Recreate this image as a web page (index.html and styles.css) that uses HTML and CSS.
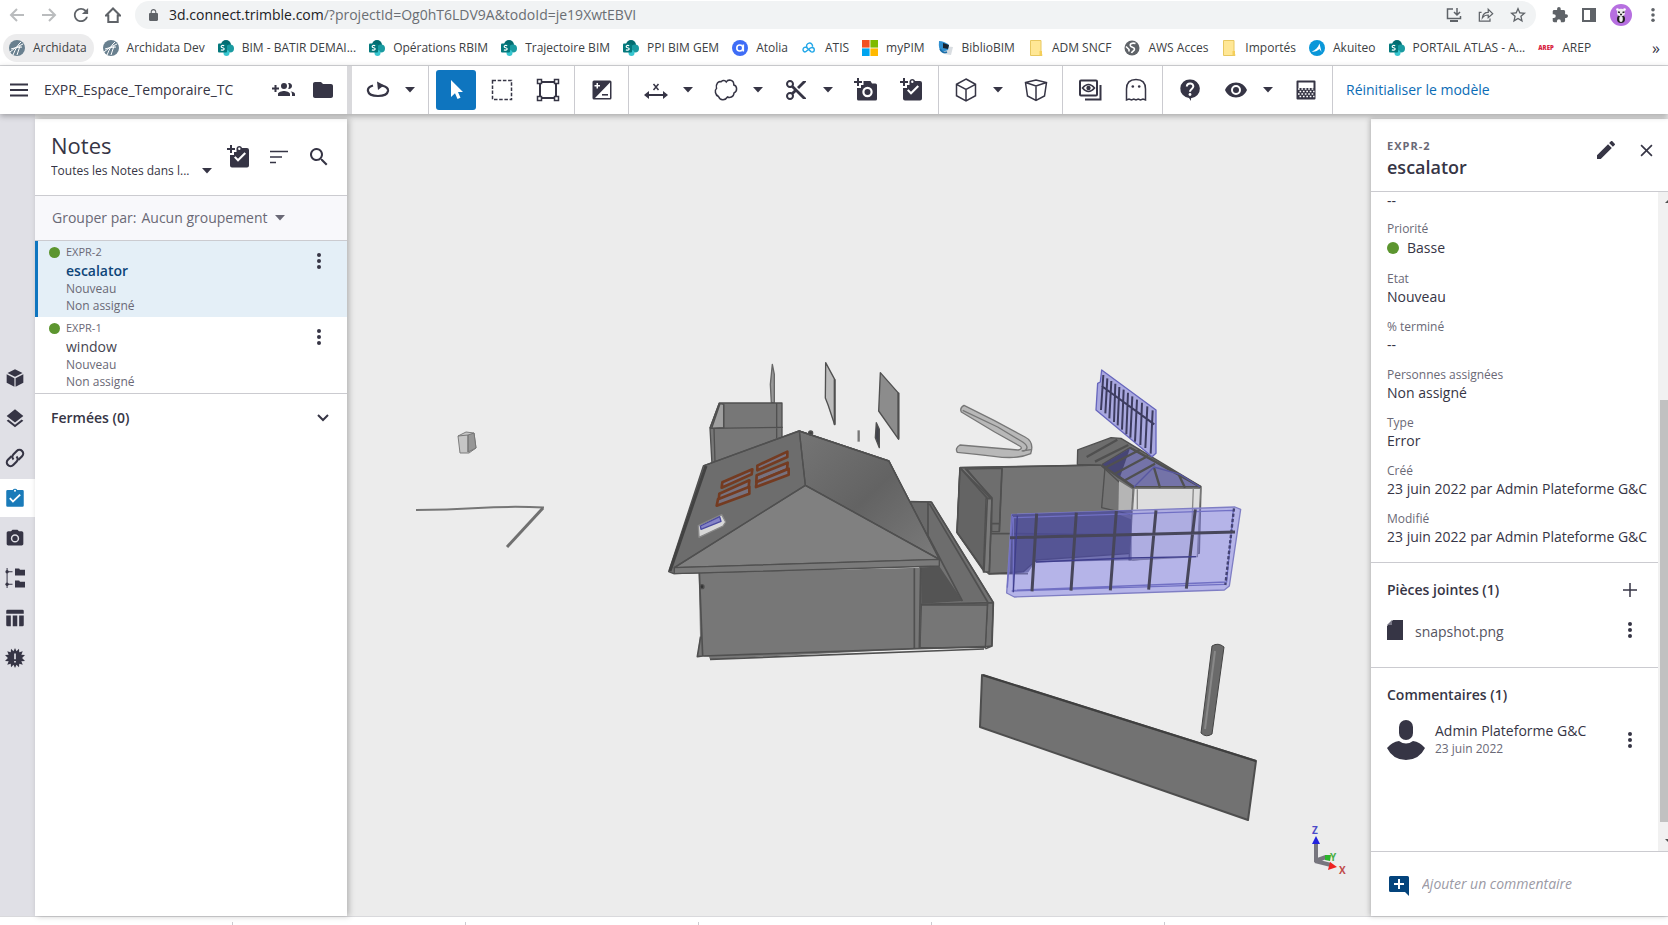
FILE: index.html
```html
<!DOCTYPE html>
<html lang="fr">
<head>
<meta charset="utf-8">
<title>Trimble Connect 3D</title>
<link rel="stylesheet" href="styles.css">
</head>
<body>
<svg class="sprite" aria-hidden="true">
  <symbol id="i-caret" viewBox="0 0 10 6"><path d="M0 0h10L5 5.500z"/></symbol>
  <symbol id="i-dots" viewBox="0 0 4 18"><circle cx="2" cy="3" r="2"/><circle cx="2" cy="9" r="2"/><circle cx="2" cy="15" r="2"/></symbol>
  <symbol id="i-clip-add" viewBox="0 0 24 24"><path d="M3 0h2v3h3v2H5v3H3V5H0V3h3z"/><path fill-rule="evenodd" d="M9.500 3a3 3 0 0 1 5.600 0H20a2 2 0 0 1 2 2v15.500a2 2 0 0 1-2 2H5a2 2 0 0 1-2-2V10h4V7h2.500zM12.300 2.500a1.200 1.200 0 1 0 0 2.400 1.200 1.200 0 0 0 0-2.400zM7 12.600l4 4.200 8-8-1.500-1.500-6.500 6.500-2.500-2.600z"/></symbol>
  <symbol id="i-camera" viewBox="0 0 24 24"><path fill-rule="evenodd" d="M9 2L7.170 4H4c-1.100 0-2 .9-2 2v13c0 1.100.9 2 2 2h16c1.100 0 2-.9 2-2V6c0-1.100-.9-2-2-2h-3.170L15 2H9zm3 15.500a5 5 0 1 1 0-10 5 5 0 0 1 0 10z"/><circle cx="12" cy="12.500" r="3.200"/></symbol>
  <symbol id="i-share" viewBox="0 0 18 18"><g fill="none" stroke="currentColor" stroke-width="1.400"><path d="M4 6H1.500v10h12v-3"/><path d="M5 12c.5-4 3-6 6.500-6V2.500L16.500 7.500l-5 4.500V9C9 9 6.500 10 5 12z"/></g></symbol>
  <symbol id="i-sp" viewBox="0 0 16 16"><circle cx="8" cy="5" r="5" fill="#036c70"/><circle cx="12" cy="8.500" r="4" fill="#1a9ba1"/><circle cx="8.500" cy="13" r="3" fill="#37c6d0"/><rect y="3.500" width="9" height="9" rx="1" fill="#03787c"/><path d="M6.200 5.800C4.800 5 3 5.500 3.200 6.800s3.100.7 3 2.200c-.1 1.200-2 1.500-3.300.7" fill="none" stroke="#fff" stroke-width="1.200"/></symbol>
  <symbol id="i-arch" viewBox="0 0 16 16"><circle cx="8" cy="8" r="8" fill="#69808f"/><path d="M1 12Q6 7 14 4M4 15Q8 5 12 2M8 15l3-9M2 9q5-2 11-2" stroke="#fff" stroke-width="1" fill="none"/></symbol>
  <symbol id="i-fold" viewBox="0 0 16 16"><path d="M2.500.500h10.500v11.500l1 3.500h-11.500z" fill="#ffe795" stroke="#e8c860"/><path d="M11.500 11h2.500v4.500h-2.500z" fill="#f5cf5a"/></symbol>
</svg>

<header class="browser">
  <div class="nav-row">
    <div class="nav-buttons">
      <button class="nav-btn off" aria-label="Précédent"><svg viewBox="0 0 16 16"><path d="M15 8H2M8 2L2 8l6 6" class="ln"/></svg></button>
      <button class="nav-btn off" aria-label="Suivant"><svg viewBox="0 0 16 16"><path d="M1 8h13M8 2l6 6-6 6" class="ln"/></svg></button>
      <button class="nav-btn" aria-label="Actualiser"><svg viewBox="3 3 18 18"><path d="M17.650 6.350C16.200 4.900 14.210 4 12 4c-4.420 0-7.990 3.580-7.990 8s3.570 8 7.990 8c3.730 0 6.840-2.550 7.730-6h-2.080c-.82 2.330-3.040 4-5.650 4-3.310 0-6-2.690-6-6s2.690-6 6-6c1.660 0 3.140.69 4.220 1.780L13 11h7V4z"/></svg></button>
      <button class="nav-btn" aria-label="Accueil"><svg viewBox="0 0 16 16"><path d="M1 8.500L8 1.500l7 7H12.700V15H3.300V8.500z" class="ln"/></svg></button>
    </div>
    <div class="url">
      <svg class="lock" viewBox="4 1 16 21"><path d="M18 8h-1V6c0-2.760-2.240-5-5-5S7 3.240 7 6v2H6c-1.100 0-2 .9-2 2v10c0 1.100.9 2 2 2h12c1.100 0 2-.9 2-2V10c0-1.100-.9-2-2-2zm-2.900 0H8.900V6c0-1.710 1.390-3.100 3.100-3.100s3.100 1.390 3.100 3.100v2z"/></svg>
      <span class="url-text"><b>3d.connect.trimble.com</b>/?projectId=Og0hT6LDV9A&amp;todoId=je19XwtEBVI</span>
      <button class="nav-btn" aria-label="Installer"><svg viewBox="0 0 16 16"><path d="M7 2H1.500v9.500h13V9M11 1v6.500M8 5l3 3 3-3" class="thin"/><path d="M4 13h8v2H4z"/></svg></button>
      <button class="nav-btn" aria-label="Partager"><svg><use href="#i-share"/></svg></button>
      <button class="nav-btn" aria-label="Favori"><svg viewBox="2 2 20 20"><path d="M22 9.240l-7.190-.62L12 2 9.190 8.630 2 9.240l5.460 4.730L5.820 21 12 17.270 18.180 21l-1.630-7.030L22 9.240zM12 15.400l-3.760 2.270 1-4.280-3.320-2.880 4.380-.38L12 6.100l1.710 4.040 4.380.38-3.320 2.880 1 4.280L12 15.400z"/></svg></button>
    </div>
    <div class="nav-end">
      <button class="nav-btn" aria-label="Extensions"><svg viewBox="1 1 22 22"><path d="M20.500 11H19V7c0-1.100-.9-2-2-2h-4V3.500a2.500 2.500 0 0 0-5 0V5H4c-1.100 0-2 .9-2 2v3.800h1.500a2.700 2.700 0 0 1 0 5.400H2V20c0 1.100.9 2 2 2h3.800v-1.500a2.700 2.700 0 0 1 5.400 0V22H17c1.100 0 2-.9 2-2v-4h1.500a2.500 2.500 0 0 0 0-5z"/></svg></button>
      <button class="nav-btn" aria-label="Panneau latéral"><svg viewBox="0 0 16 16"><path fill-rule="evenodd" d="M1 1h14v14H1zM3 3v10h6V3z"/></svg></button>
      <button class="nav-btn profile" aria-label="Profil"><svg viewBox="0 0 22 22"><circle cx="11" cy="11" r="11" fill="#b66fe0"/><ellipse cx="11" cy="15" rx="4" ry="4" fill="#222"/><ellipse cx="11" cy="15" rx="1.800" ry="3" fill="#eee"/><circle cx="7.500" cy="5.500" r="1.300" fill="#fff"/><circle cx="14.500" cy="5.500" r="1.300" fill="#fff"/><ellipse cx="11" cy="8.500" rx="4" ry="3.800" fill="#eee"/><path d="M8 8l2 .5M12.500 8.500l2-.5M10 10.500h2" stroke="#222" stroke-width="1.300"/></svg></button>
      <button class="nav-btn" aria-label="Menu"><svg><use href="#i-dots"/></svg></button>
    </div>
  </div>
  <nav class="bookmarks" aria-label="Favoris">
    <a href="#" class="current"><svg><use href="#i-arch"/></svg>Archidata</a>
    <a href="#"><svg><use href="#i-arch"/></svg>Archidata Dev</a>
    <a href="#"><svg><use href="#i-sp"/></svg>BIM - BATIR DEMAI...</a>
    <a href="#"><svg><use href="#i-sp"/></svg>Opérations RBIM</a>
    <a href="#"><svg><use href="#i-sp"/></svg>Trajectoire BIM</a>
    <a href="#"><svg><use href="#i-sp"/></svg>PPI BIM GEM</a>
    <a href="#"><svg viewBox="0 0 16 16"><circle cx="8" cy="8" r="8" fill="#3f6df6"/><circle cx="7.800" cy="8" r="3" fill="none" stroke="#fff" stroke-width="1.600"/><path d="M11.300 4.500v7" stroke="#fff" stroke-width="1.600"/></svg>Atolia</a>
    <a href="#"><svg viewBox="0 0 16 16"><path d="M10 11.500L5.500 7.500A2.400 2.400 0 1 0 4 12c2 0 4-4.500 7-4.500a2.300 2.300 0 0 1 0 4.600c-2 0-3.500-3-5-4.500a3 3 0 1 1 5.500-1" fill="none" stroke="#22a7e8" stroke-width="1.400"/></svg>ATIS</a>
    <a href="#"><svg viewBox="0 0 16 16"><path d="M0 0h7.600v7.600H0z" fill="#f25022"/><path d="M8.400 0H16v7.600H8.400z" fill="#7fba00"/><path d="M0 8.400h7.600V16H0z" fill="#00a4ef"/><path d="M8.400 8.400H16V16H8.400z" fill="#ffb900"/></svg>myPIM</a>
    <a href="#"><svg viewBox="0 0 16 16"><path d="M6 6l9 1-2 8-7-1z" fill="#d9dde1"/><path d="M1 1q5 0 10 4l-1 5-6 2q-4-2-3-11z" fill="#2f8fd0"/><path d="M5 3l6 2-1 4-5-1z" fill="#182430"/><path d="M2 9q3 5 7 3" stroke="#1d6fa8" fill="none" stroke-width="1.500"/></svg>BiblioBIM</a>
    <a href="#"><svg><use href="#i-fold"/></svg>ADM SNCF</a>
    <a href="#"><svg viewBox="0 0 16 16"><circle cx="8" cy="8" r="7.500" fill="#5f6368"/><path d="M11.500 3.500c-3-1-6 0-5 2.500.7 1.500 4 1 4 3 0 2-2 2-3 4M2 6.500l3 3v2" fill="none" stroke="#fff" stroke-width="1.600"/></svg>AWS Acces</a>
    <a href="#"><svg><use href="#i-fold"/></svg>Importés</a>
    <a href="#"><svg viewBox="0 0 16 16"><circle cx="8" cy="8" r="8" fill="#0a97d9"/><path d="M2.500 11.500C6 10.500 9 8 10.500 3.500l2 8.500-2-3C8.500 11 5.500 12 2.500 11.500z" fill="#fff"/></svg>Akuiteo</a>
    <a href="#"><svg><use href="#i-sp"/></svg>PORTAIL ATLAS - A...</a>
    <a href="#"><span class="arep">AREP</span>AREP</a>
    <button class="more" aria-label="Autres favoris">»</button>
  </nav>
</header>

<div class="topbar">
  <div class="project">
    <button class="icon-btn menu" aria-label="Menu"><svg viewBox="0 0 18 14"><path d="M0 1.500h18M0 7h18M0 12.500h18" class="ln"/></svg></button>
    <span class="project-name">EXPR_Espace_Temporaire_TC</span>
    <button class="icon-btn" aria-label="Inviter"><svg class="s24" viewBox="0 0 24 24"><path d="M8 9.500H5.500V7h-2v2.500H1v2h2.500V14h2v-2.500H8zM18 11c1.660 0 3-1.340 3-3s-1.340-3-3-3c-.32 0-.63.050-.91.140.57.81.9 1.790.9 2.860s-.34 2.040-.9 2.860c.28.090.59.140.91.140zm-5 0a3 3 0 1 0 0-6 3 3 0 0 0 0 6zm6.620 2.160c.83.73 1.380 1.660 1.380 2.840v2h3v-2c0-1.540-2.370-2.490-4.380-2.840zM13 13c-2 0-6 1-6 3v2h12v-2c0-2-4-3-6-3z"/></svg></button>
    <button class="icon-btn" aria-label="Dossier"><svg class="s24" viewBox="0 0 24 24"><path d="M10 4H4c-1.100 0-2 .9-2 2v12c0 1.100.9 2 2 2h16c1.100 0 2-.9 2-2V8c0-1.100-.9-2-2-2h-8z"/></svg></button>
  </div>
  <div class="tools">
    <div class="group">
      <div class="pair"><button class="tool" aria-label="Orbite"><svg viewBox="0 0 24 24"><path d="M7 7.500C3.500 8.500 1.500 10.500 2 13c.5 3 4.500 5 10 5s9.500-2 10-5c.3-2.500-2-4.500-6-5.300" fill="none" stroke="currentColor" stroke-width="2.200"/><path d="M11 3.500l7 3.700-6 4.800z"/></svg></button><button class="drop" aria-label="Options d'orbite"><svg><use href="#i-caret"/></svg></button></div>
    </div>
    <div class="group">
      <button class="tool active" aria-label="Sélection"><svg viewBox="0 0 24 24"><path d="M7 2v17l4-3.700L13.500 21l3-1.300L14 14h5z"/></svg></button>
      <button class="tool" aria-label="Rectangle"><svg viewBox="0 0 24 24"><path d="M2.500 2.500h19v19h-19z" fill="none" stroke="currentColor" stroke-width="1.500" stroke-dasharray="3.500 1.700"/></svg></button>
      <button class="tool" aria-label="Zone"><svg viewBox="0 0 24 24"><path d="M4 4h16v16H4z" class="ln"/><g fill="#fff" stroke="currentColor" stroke-width="1.500"><path d="M1.500 1.500h4v4h-4zM18.500 1.500h4v4h-4zM1.500 18.500h4v4h-4zM18.500 18.500h4v4h-4z"/></g></svg></button>
    </div>
    <div class="group">
      <button class="tool" aria-label="Contraste"><svg viewBox="0 0 24 24"><path fill-rule="evenodd" d="M4 2.500h16a1.500 1.500 0 0 1 1.500 1.500v16a1.500 1.500 0 0 1-1.500 1.500H4A1.500 1.500 0 0 1 2.500 20V4A1.500 1.500 0 0 1 4 2.500zM20 4.500L5 20h15zM6.500 5v2h-2v1.500h2v2H8v-2h2V7H8V5z"/><path d="M12 16h6v1.600h-6z"/></svg></button>
    </div>
    <div class="group">
      <div class="pair"><button class="tool" aria-label="Mesure"><svg viewBox="0 0 24 24"><path d="M0 17l5-4v3h14v-3l5 4-5 4v-3H5v3z"/><path d="M9.500 6l5 6M14.500 6l-5 6" stroke="currentColor" stroke-width="1.500"/></svg></button><button class="drop" aria-label="Options de mesure"><svg><use href="#i-caret"/></svg></button></div>
      <div class="pair"><button class="tool" aria-label="Annotation"><svg viewBox="0 0 24 24"><path d="M12.300 4C14 1 20 1.500 19.800 7c3.700 1 3.700 6.500.2 8-.3 4.500-4.500 5-6.500 4-2.500 4-7.500 3.500-9-.5C1 17 .5 12 2.500 10.500 1.500 5.500 4.500 3 7 3.800c2-1.800 4-1.500 5.300.2z" class="thin"/></svg></button><button class="drop" aria-label="Options d'annotation"><svg><use href="#i-caret"/></svg></button></div>
      <div class="pair"><button class="tool" aria-label="Coupe"><svg viewBox="0 0 24 24"><path d="M9.640 7.640c.23-.5.36-1.050.36-1.640 0-2.210-1.790-4-4-4S2 3.790 2 6s1.790 4 4 4c.59 0 1.140-.13 1.640-.36L10 12l-2.360 2.360C7.140 14.130 6.590 14 6 14c-2.210 0-4 1.790-4 4s1.790 4 4 4 4-1.790 4-4c0-.59-.13-1.140-.36-1.640L12 14l7 7h3v-1zM6 8a2 2 0 1 1 0-4 2 2 0 0 1 0 4zm0 12a2 2 0 1 1 0-4 2 2 0 0 1 0 4zM19 3l-6 6 2 2 7-7V3z"/></svg></button><button class="drop" aria-label="Options de coupe"><svg><use href="#i-caret"/></svg></button></div>
      <button class="tool" aria-label="Ajouter une vue"><svg viewBox="0 0 24 24"><path d="M3 0h2v3h3v2H5v3H3V5H0V3h3z"/><path fill-rule="evenodd" d="M9.500 3h7l1.500 2.500h3.500A1.500 1.500 0 0 1 23 7v14a1.500 1.500 0 0 1-1.500 1.500h-17A1.500 1.500 0 0 1 3 21V10h4V7h2.500zM13.500 8.800a5.200 5.200 0 1 0 0 10.400 5.200 5.200 0 0 0 0-10.400z"/><circle cx="13.500" cy="14" r="3"/></svg></button>
      <button class="tool" aria-label="Ajouter une note"><svg><use href="#i-clip-add"/></svg></button>
    </div>
    <div class="group">
      <div class="pair"><button class="tool" aria-label="Vue 3D"><svg viewBox="0 0 24 24"><path d="M12 1l9.500 5.300v11.400L12 23l-9.500-5.300V6.300zM2.500 6.300L12 11.500l9.500-5.200M12 11.500V23" class="thin"/></svg></button><button class="drop" aria-label="Options de vue"><svg><use href="#i-caret"/></svg></button></div>
      <button class="tool" aria-label="Perspective"><svg viewBox="0 0 24 24"><path d="M1.500 4.500L12 2l10.500 2.500L20.500 18 12 22.500 3.500 18zM1.500 4.500L12 8l10.500-3.500M12 8v14.500" class="thin"/></svg></button>
    </div>
    <div class="group">
      <button class="tool" aria-label="Vues"><svg viewBox="0 0 24 24"><rect x="2" y="2.500" width="17" height="15" rx="1" class="ln"/><path d="M7 21.500h15.500V7" class="ln"/><path d="M4.500 10q6-7 12 0-6 7-12 0z" fill="none" stroke="currentColor" stroke-width="1.600"/><circle cx="10.500" cy="10" r="2.200"/></svg></button>
      <button class="tool" aria-label="Fantôme"><svg viewBox="0 0 24 24"><path d="M2.500 22V11C2.500 5 6 1.500 12 1.500S21.500 5 21.500 11v11l-2.500-1-2.500 1-2.300-1-2.200 1-2.200-1-2.300 1L5 21z" class="thin"/><circle cx="8.800" cy="8.500" r="1.300"/><circle cx="15.200" cy="8.500" r="1.300"/></svg></button>
    </div>
    <div class="group">
      <button class="tool" aria-label="Aide"><svg viewBox="0 0 24 24"><path d="M12 1.500a9 9 0 0 0-1 18.400l2 3.100v-2.800A9 9 0 0 0 12 1.500z"/><path d="M8.800 8.500c.2-4.300 6.800-4 6.500 0-.2 2.500-3.300 2.500-3.300 5.300" fill="none" stroke="#fff" stroke-width="2"/><circle cx="12" cy="16.500" r="1.400" fill="#fff"/></svg></button>
      <div class="pair"><button class="tool" aria-label="Visibilité"><svg viewBox="0 0 24 24"><path fill-rule="evenodd" d="M12 4.500C7 4.500 2.730 7.610 1 12c1.730 4.390 6 7.500 11 7.500s9.270-3.110 11-7.500c-1.730-4.390-6-7.500-11-7.500zM12 17a5 5 0 1 1 0-10 5 5 0 0 1 0 10z"/><circle cx="12" cy="12" r="3"/></svg></button><button class="drop" aria-label="Options de visibilité"><svg><use href="#i-caret"/></svg></button></div>
      <button class="tool" aria-label="Transparence"><svg viewBox="0 0 24 24"><path fill-rule="evenodd" d="M3.500 2.500h17a1 1 0 0 1 1 1v17a1 1 0 0 1-1 1h-17a1 1 0 0 1-1-1v-17a1 1 0 0 1 1-1zM4.500 4.500V10h15V4.500z"/><path d="M4 11h16M5.500 13.500h15M4 16h16M5.500 18.500h15" stroke="#fff" stroke-width="1.500" stroke-dasharray="1.700 1.700"/></svg></button>
    </div>
    <button class="reset">Réinitialiser le modèle</button>
  </div>
</div>

<main class="workspace">
  <nav class="rail" aria-label="Panneaux">
    <button aria-label="Modèles"><svg viewBox="0 0 24 24"><path d="M12 1.500L21 6l-9 4.500L3 6zM2 7.500l9.300 4.700V22.500L2 17.800zM22 7.500l-9.300 4.700V22.500L22 17.800z"/></svg></button>
    <button aria-label="Calques"><svg viewBox="0 0 24 24"><path d="M12 20l-8-6.200-2 1.600 10 7.600 10-7.600-2-1.600zM12 17.500l10-7.800L12 1.500 2 9.700z"/></svg></button>
    <button aria-label="Liens"><svg viewBox="0 0 24 24"><g transform="rotate(-45 12 12)" fill="none" stroke="currentColor" stroke-width="2.600"><path d="M11 7.500H4.500a4.500 4.500 0 0 0 0 9H10a4.500 4.500 0 0 0 4.500-4.500"/><path d="M13 16.500h6.500a4.500 4.500 0 0 0 0-9H14A4.500 4.500 0 0 0 9.500 12"/></g></svg></button>
    <button class="active" aria-label="Notes"><svg viewBox="0 0 24 24"><path fill-rule="evenodd" d="M9.300 2.500a3 3 0 0 1 5.400 0H21a1.500 1.500 0 0 1 1.500 1.500v17a1.500 1.500 0 0 1-1.500 1.500H3A1.500 1.500 0 0 1 1.500 21V4A1.500 1.500 0 0 1 3 2.500zM12 2a1.200 1.200 0 1 0 0 2.400A1.200 1.200 0 0 0 12 2zM5 13l4.500 4.800 9.500-9-1.600-1.700-7.800 7.500-3-3.200z"/></svg></button>
    <button aria-label="Vues"><svg><use href="#i-camera"/></svg></button>
    <button aria-label="Arborescence"><svg viewBox="0 0 24 24"><path d="M2.500 0v24M2.500 4.500H9M2.500 19.500H9" stroke="currentColor" stroke-width="1.200"/><circle cx="2.500" cy="4.500" r="2"/><circle cx="2.500" cy="19.500" r="2"/><path d="M12 .5h5l1 1.500h6v7H12zM12 15h5l1 1.500h6V23.500H12z"/></svg></button>
    <button aria-label="Tableau"><svg viewBox="0 0 24 24"><path d="M3 2h18a1.500 1.500 0 0 1 1.500 1.500V7h-21V3.500A1.500 1.500 0 0 1 3 2zM1.500 9H7v13H3a1.500 1.500 0 0 1-1.500-1.500zM9.300 9h5.400v13H9.300zM17 9h5.500v11.500A1.500 1.500 0 0 1 21 22h-4z"/></svg></button>
    <button aria-label="Conflits"><svg viewBox="0 0 24 24"><path d="M12 0l1.800 4 3-3 .3 4.200 4.200-1.200-1.700 4L24 8.500 20.500 12l3.500 3.500-4.400.5 1.700 4-4.200-1.200-.3 4.200-3-3L12 24l-1.800-4-3 3-.3-4.200-4.200 1.200 1.700-4L0 15.500 3.500 12 0 8.500 4.400 8 2.700 4l4.200 1.200L7.200 1l3 3z"/><path d="M11 6.500h2v7h-2zM11 15.500h2v2h-2z" fill="#e0e0e6"/></svg></button>
  </nav>

  <section class="notes">
    <header class="notes-head">
      <div class="notes-title">
        <h1>Notes</h1>
        <div class="select-line small"><select aria-label="Filtre des notes"><option>Toutes les Notes dans l...</option></select><svg class="caret"><use href="#i-caret"/></svg></div>
      </div>
      <button class="icon-btn" aria-label="Ajouter une note"><svg class="s24"><use href="#i-clip-add"/></svg></button>
      <button class="icon-btn" aria-label="Trier"><svg viewBox="0 0 18 14"><path d="M0 1.500h18M0 7h12M0 12.500h6" stroke="currentColor" stroke-width="1.500"/></svg></button>
      <button class="icon-btn" aria-label="Rechercher"><svg viewBox="3 3 18 18"><path d="M15.500 14h-.79l-.28-.27A6.500 6.500 0 1 0 13.730 14.430l.27.28v.79l5 4.990L20.490 19zm-6 0a4.500 4.500 0 1 1 0-9 4.500 4.500 0 0 1 0 9z"/></svg></button>
    </header>
    <div class="select-line grouping"><label for="grp">Grouper par:</label><select id="grp"><option>Aucun groupement</option></select><svg class="caret"><use href="#i-caret"/></svg></div>
    <ul class="note-list">
      <li class="note selected">
        <i class="dot"></i>
        <div class="note-body"><span>EXPR-2</span><strong>escalator</strong><span>Nouveau</span><span>Non assigné</span></div>
        <button class="kebab" aria-label="Options EXPR-2"><svg><use href="#i-dots"/></svg></button>
      </li>
      <li class="note">
        <i class="dot"></i>
        <div class="note-body"><span>EXPR-1</span><strong>window</strong><span>Nouveau</span><span>Non assigné</span></div>
        <button class="kebab" aria-label="Options EXPR-1"><svg><use href="#i-dots"/></svg></button>
      </li>
    </ul>
    <button class="closed">Fermées (0)<svg viewBox="0 0 12 8"><path d="M1 1l5 5 5-5" class="ln"/></svg></button>
  </section>

  <section class="viewport" aria-label="Modèle 3D">
    <svg viewBox="347 113 1024 802" preserveAspectRatio="xMidYMid slice" role="img" aria-label="Modèle">
      <defs><linearGradient id="roof" x1="0" y1="0" x2="1" y2="1"><stop offset="0" stop-color="#757575"/><stop offset=".5" stop-color="#636363"/><stop offset="1" stop-color="#7b7b7b"/></linearGradient></defs>
      <g class="edge">
        <path d="M458 435l8-4 8 1 2 15-7 5h-9z" fill="#c6c6c6" stroke="#7d7d7d"/><path d="M468 434l6-2 2 15-8 4z" fill="#979797" stroke="#777"/><path d="M458 435l10-1v17" fill="none" stroke="#777"/>
        <path d="M416 509q30 0 62-2t66-.5" fill="none" stroke="#767676" stroke-width="2"/><path d="M543 507l-36 39" stroke="#707070" stroke-width="3"/>
      </g>
      <g transform="translate(640 350) scale(.33333)" class="big">
        <path d="M397 40l-6 60 3 55h9V70z" fill="#999" stroke="#666"/>
        <path d="M557 35l27 50v136l-20-60-8-20z" fill="#bcbcbc"/><path d="M584 85v136" stroke-width="6"/>
        <path d="M721 65l55 62v138l-60-85z" fill="#8c8c8c"/><path d="M775 125v138" stroke-width="6"/>
        <path d="M656 238v34" stroke="#777" stroke-width="7"/><path d="M709 215l9 20v55l-12-30z" fill="#41434b"/>
        <path d="M238 156h188v105l-210 80-6-110z" fill="#777"/><path d="M251 160v70l-36 2 25-74z" fill="#a0a0a0"/><path d="M210 232l218-3M251 160v70M410 156v105M222 234l3 100M238 156l-28 76"/>
        <path d="M806 452l68 1 186 302-5 130-20 2-195 5V650z" fill="#737373"/><path d="M864 454l-58-2 37 198 55-4-34-92z" fill="#6a6a6a" stroke="none"/><path d="M843 650l55-4 70 104-124 8z" fill="#545454" stroke="none"/><path d="M864 454l11 0 170 296-79 2-102-198z" fill="#6d6d6d" stroke="none"/>
        <path d="M806 452l68 1M864 454v100l103 196M874 453l186 302-4 130-20 8M868 458l175 295-8 138M843 760l217-5" stroke-width="5"/><path d="M844 762h198l-6 128H840z" fill="#767676"/>
        <path d="M176 665l667-15-3 243-630 32-3-8-35-2 8-60z" fill="#777" stroke="none"/><path d="M190 915l640-22 206-6M210 925l822-31M823 652v240M842 650l-4 242M178 665l10 250-16 2 10-60" stroke-width="5"/>
        <path d="M190 345l287-105 270 90 62 122 90 172-3 20-795 24-15-6z" fill="#6d6d6d"/><path d="M478 240l268 90 64 123 88 172-402-222z" fill="url(#roof)"/><path d="M496 403L103 650l795-25z" fill="#808080"/>
        <path d="M103 650l795-25v20L103 668z" fill="#7a7a7a"/><path d="M478 240l18 163L103 650M496 403l402 222M190 345l287-105 270 90 62 122 90 172"/><path d="M198 345L90 660" stroke-width="9" stroke="#424242"/>
        <circle cx="512" cy="246" r="6" fill="#444"/><circle cx="186" cy="707" r="6" fill="#333"/>
        <g fill="#77727f" stroke="#743b21" stroke-width="8"><path d="M247 394l90-39-2 15-90 40z"/><path d="M352 344l90-42v16l-90 40z"/><path d="M238 428l90-40-2 22-90 38z"/><path d="M350 373l93-38-2 20-92 38z"/><path d="M234 445l94-38v21l-98 36z"/><path d="M350 393l96-40v18l-98 37z"/></g>
        <path d="M175 524l70-33 12 22-8 12-72 34z" fill="#d8d8d8" stroke="#888"/><path d="M181 525l58-28 4 14-60 24z" fill="#8584c6" stroke="#4a49a0"/>
      </g>
      <g transform="translate(930 350) scale(.33333)" class="big">
        <path d="M102 163q-14 8-8 20l100 60 75 42q12 8-4 12L90 282q-16 10-8 22 60 6 110 12 70 10 110-8 12-35-17-50l-93-50z" fill="#b8b8b8" stroke="#777"/><path d="M98 178l105 50 75 45q25 18 2 28M275 300l28-4" stroke="#777"/>
        <path d="M90 350l425-8 90 55v210l-285 20-40 35-103 7-18-14-78-110z" fill="#747474"/><path d="M90 350l92 92-18 218-83-116z" fill="#646464"/><path d="M168 443h18l-8 220h-18z" fill="#7b7b7b"/><path d="M216 352l-8 190h-23V442l-75-88z" fill="#6e6e6e"/>
        <path d="M90 350l425-8M90 350l82 92h14l-8 222M172 443l-10 218L81 544l9-194M216 352l-8 190M186 518h22M184 547l420 5M176 668h118M105 352l82 90" stroke-width="5"/>
        <path d="M443 297l100-37 30 2 240 145-5 200-200 20-4-200-92-85-70-2z" fill="#6d6d6d"/><path d="M567 390l40 25-4 90-38-15z" fill="#b5b5b5" stroke="none"/><path d="M612 412h200l-10 205-205 10z" fill="#dedede" stroke="#777"/><path d="M622 415v60M790 412l-8 205" stroke="#888"/>
        <path d="M517 340l83-50 210 117H612z" fill="#7473a8"/><path d="M515 342l85-50-32 92z" fill="#474675" stroke="none"/><path d="M470 318l92-52M495 332l100-50M525 350l105-54M552 370l102-55M585 388l90-50M672 350l18 60M745 368l20 42M600 290l212 118M515 342l97 68" stroke-width="7"/><path d="M612 408l60-60 78 22 60 38" stroke="#5857a0"/><path d="M525 350l-10 120 85 20"/>
        <path d="M515 57l163 120v130l-12 10-168-140 5-80 8-4z" fill="#a9a8df" stroke="#6766bd"/>
        <path d="M520 72l-7 105M532 82l-6 105M544 90l-6 112M556 98l-4 115M568 108l-5 115M581 116l-5 120M594 125l-5 125M607 136l-6 124M621 146l-6 126M636 155l-5 127M652 166l-6 125M668 178l-6 130M515 105l158 115" stroke="#3d3c60" stroke-width="6"/>
        <path d="M245 490l670-22 17 7-34 230-15 12-630 21-23-12z" fill="#8280e4" fill-opacity=".52" stroke="#7f7ec4"/>
        <path d="M245 490l360-12v150l-290 6-20 30-55 5z" fill="#302f7c" fill-opacity=".5" stroke="none"/>
        <path d="M250 500l660-22-20 215-640 25zM245 720l640-20M232 710l15-215" stroke="#7170c4" stroke-width="4"/><path d="M912 472l-26 230" stroke="#444374" stroke-dasharray="10 6" stroke-width="7"/>
        <path d="M320 488l-14 233M439 485l-16 234M559 480l-18 238M678 478l-22 238M796 475l-27 238M240 560l675-17" stroke="#47465a" stroke-width="9"/><path d="M262 494l-12 230M318 633l280-12 200-4" stroke="#3f3e8c"/>
      </g>
      <g class="edge"><path d="M982 674l274 86-8 59-268-93z" fill="#727272" stroke="#4e4e4e" stroke-width="2"/><path d="M983 674l273 86" stroke="#3f3f3f" stroke-width="2"/><path d="M1212 645q6-4 12 1l-12 87q-6 4-11-1z" fill="#6a6a6a" stroke="#444"/><path d="M1215 650l-10 78" stroke="#888" stroke-width="2"/></g>
      <g stroke-width="4" stroke="#77767e"><path d="M1316 861v-22M1315 860l11-4M1315 860l16 4"/></g><path d="M1312 843l4-8 4 8z" fill="#2222dd"/><path d="M1325 854l6 0-1 6-5-1z" fill="#2bb52b"/><path d="M1330 861l7 5-9 3z" fill="#e22"/>
      <text x="1312" y="833" fill="#4c4bc8">Z</text><text x="1330" y="860" fill="#4ab04a">Y</text><text x="1339" y="873" fill="#c04a4a">X</text>
    </svg>
  </section>

  <aside class="detail">
    <header class="detail-head">
      <div><p class="ref">EXPR-2</p><h2>escalator</h2></div>
      <button class="icon-btn" aria-label="Modifier"><svg viewBox="3 3 18 18"><path d="M3 17.250V21h3.750L17.810 9.940l-3.750-3.750zM20.710 7.040c.39-.39.39-1.020 0-1.410l-2.340-2.340c-.39-.39-1.020-.39-1.410 0l-1.830 1.830 3.750 3.750z"/></svg></button>
      <button class="icon-btn" aria-label="Fermer"><svg class="s12" viewBox="0 0 12 12"><path d="M1 1l10 10M11 1L1 11" class="thin"/></svg></button>
    </header>
    <div class="detail-main">
      <div class="scroll">
        <dl class="fields">
          <div><dd class="first">--</dd></div>
          <div><dt>Priorité</dt><dd class="prio"><i class="dot"></i>Basse</dd></div>
          <div><dt>Etat</dt><dd>Nouveau</dd></div>
          <div><dt>% terminé</dt><dd>--</dd></div>
          <div><dt>Personnes assignées</dt><dd>Non assigné</dd></div>
          <div><dt>Type</dt><dd>Error</dd></div>
          <div><dt>Créé</dt><dd>23 juin 2022 par Admin Plateforme G&amp;C</dd></div>
          <div><dt>Modifié</dt><dd>23 juin 2022 par Admin Plateforme G&amp;C</dd></div>
        </dl>
        <section class="block">
          <div class="row"><h3>Pièces jointes (1)</h3><button class="icon-btn end" aria-label="Ajouter une pièce jointe"><svg class="s14" viewBox="0 0 14 14"><path d="M7 0v14M0 7h14" class="thin"/></svg></button></div>
          <div class="row file"><svg class="doc" viewBox="0 0 16 20"><path d="M6 0h10v20H0V6z"/><path d="M5 0v5H0z" fill="#777685"/></svg><a href="#">snapshot.png</a><button class="kebab end" aria-label="Options du fichier"><svg><use href="#i-dots"/></svg></button></div>
        </section>
        <section class="block">
          <div class="row"><h3>Commentaires (1)</h3></div>
          <div class="row comment"><svg class="avatar" viewBox="0 0 38 40"><rect x="12" y="0" width="14" height="20" rx="7"/><path d="M0 28q5-6 12-7 7 5 14 0 7 1 12 7-6 12-19 12T0 28z"/></svg><div><p>Admin Plateforme G&amp;C</p><small>23 juin 2022</small></div><button class="kebab end" aria-label="Options du commentaire"><svg><use href="#i-dots"/></svg></button></div>
        </section>
      </div>
      <div class="bar" aria-hidden="true"><svg viewBox="0 0 10 5"><path d="M0 5l5-5 5 5z"/></svg><span></span><svg viewBox="0 0 10 5"><path d="M0 0h10L5 5z"/></svg></div>
    </div>
    <form class="add">
      <svg viewBox="0 0 20 20"><path fill-rule="evenodd" d="M1.500 0h17A1.500 1.500 0 0 1 20 1.500V20l-4-4H1.500A1.500 1.500 0 0 1 0 14.500v-13A1.500 1.500 0 0 1 1.500 0zM9 3v4H5v2h4v4h2V9h4V7h-4V3z"/></svg>
      <input type="text" aria-label="Commentaire" placeholder="Ajouter un commentaire">
    </form>
  </aside>
</main>
<footer class="strip"><i></i><i></i><i></i><i></i><i></i></footer>
</body>
</html>
```
FILE: styles.css
```css
* { box-sizing: border-box; }
html, body { height: 100%; }
body {
  margin: 0;
  display: flex;
  flex-direction: column;
  overflow: hidden;
  background: #fff;
  color: #363545;
  font: 14px/20px "Open Sans", "Noto Sans", sans-serif;
}
h1, h2, h3, p, ul, dl, dd { margin: 0; padding: 0; }
button, select, input { font: inherit; color: inherit; border: 0; background: none; padding: 0; margin: 0; }
svg { fill: currentColor; display: block; flex: none; }
.sprite { position: absolute; width: 0; height: 0; }
.ln { fill: none; stroke: currentColor; stroke-width: 2; }
.thin { fill: none; stroke: currentColor; stroke-width: 1.5; }

/* Browser chrome */
.browser { border-bottom: 1px solid #d5d6d9; flex: none; }
.nav-row { display: flex; align-items: center; height: 30px; color: #5f6368; }
.nav-buttons { display: flex; gap: 16px; padding: 0 14px 0 9px; }
.nav-btn { width: 16px; height: 16px; display: grid; place-items: center; flex: none; }
.nav-btn svg { width: 16px; height: 16px; }
.nav-btn.off { color: #babcbe; }
.url { flex: 1; display: flex; align-items: center; gap: 16px; height: 28px; padding: 0 10px 0 12px; border-radius: 14px; background: #f1f3f4; }
.lock { width: 9px; height: 12px; margin-left: 2px; }
.url-text { flex: 1; margin-left: -5px; color: #6a6e73; }
.url-text b { font-weight: 400; color: #202124; }
.nav-end { display: flex; align-items: center; gap: 13px; padding: 0 7px 0 16px; }
.profile, .profile svg { width: 22px; height: 22px; }
.bookmarks { display: flex; align-items: center; height: 35px; padding: 0 8px 0 3px; font-size: 12px; line-height: 16px; }
.bookmarks a { display: flex; align-items: center; gap: 8px; height: 28px; padding: 0 7px 0 6px; border-radius: 14px; color: #3c4043; text-decoration: none; white-space: nowrap; }
.bookmarks a.current { background: #ececed; margin-right: 3px; }
.bookmarks svg { width: 16px; height: 16px; }
.arep { width: 16px; color: #d8233f; font-size: 6px; font-weight: 800; }
.more { margin-left: auto; font-size: 16px; }

/* Application header */
.topbar { display: flex; gap: 5px; height: 48px; flex: none; background: #d9d9dc; box-shadow: 0 2px 6px #0000004d; position: relative; z-index: 2; }
.project { width: 347px; display: flex; align-items: center; background: #fff; padding: 0 4px 0 0; }
.project-name { flex: 1; margin-left: 6px; }
.icon-btn { width: 40px; height: 40px; display: grid; place-items: center; flex: none; }
.icon-btn svg { width: 18px; height: 18px; }
.icon-btn .s24 { width: 24px; height: 24px; }
.icon-btn .s14 { width: 14px; height: 14px; }
.icon-btn .s12 { width: 13px; height: 13px; }
.menu { width: 38px; }
.tools { flex: 1; display: flex; background: #fff; }
.group { display: flex; align-items: center; gap: 6px; padding: 0 6px; border-right: 1px solid #cbcbd0; }
.group + .group { padding-left: 7px; }
.pair { display: flex; }
.tool { width: 40px; height: 40px; display: grid; place-items: center; border-radius: 3px; }
.tool svg { width: 24px; height: 24px; }
.tool.active { background: #0e75bf; color: #fff; }
.drop { width: 24px; display: grid; place-items: center; }
.drop svg, .caret { width: 10px; height: 6px; }
.reset { padding: 0 13px; color: #0b6cb5; font-weight: 500; }

/* Workspace */
.workspace { flex: 1; min-height: 0; display: flex; background: #ececec; border-bottom: 1px solid #d9d9dc; }
.rail { width: 35px; flex: none; display: flex; flex-direction: column; justify-content: center; padding-top: 5px; background: #e0e0e6; }
.rail button { height: 40px; padding-left: 5px; }
.rail svg { width: 20px; height: 20px; }
.rail .active { color: #1a7bb9; background: #fff; height: 38px; margin: 1px 0; }
.notes { width: 312px; flex: none; margin-top: 5px; background: #fff; box-shadow: 2px 0 6px #00000040; z-index: 1; }
.notes-head { display: flex; align-items: center; height: 77px; padding-right: 8px; border-bottom: 1px solid #cbcbd0; }
.notes-title { flex: 1; padding: 0 0 5px 16px; }
h1 { font-size: 22px; line-height: 32px; font-weight: 500; }
.select-line { display: flex; align-items: center; }
.select-line select { appearance: none; field-sizing: content; }
.small { font-size: 12px; gap: 13px; line-height: 20px; }
.grouping { height: 45px; padding-left: 17px; gap: 5px; background: #f8f8fb; border-bottom: 1px solid #cbcbd0; color: #6a6976; }
.grouping .caret { margin-left: 2px; }
.note-list { list-style: none; border-bottom: 1px solid #cbcbd0; }
.note { display: flex; height: 76px; border-left: 3px solid transparent; padding: 2px 20px 2px 11px; }
.note.selected { background: #e4eff7; border-color: #0e75bf; }
.dot { width: 11px; height: 11px; border-radius: 50%; background: #5c952f; flex: none; }
.note .dot { margin: 4px 6px 0 0; }
.note-body { flex: 1; display: flex; flex-direction: column; font-size: 12px; line-height: 17px; color: #6a6976; }
.note-body strong { font-size: 14px; line-height: 19px; font-weight: 400; color: #45444f; }
.note-body span:first-child { font-size: 11px; line-height: 18px; }
.selected strong { font-weight: 600; color: #0e4579; }
.kebab { width: 16px; height: 18px; display: grid; place-items: center; }
.kebab svg { width: 4px; height: 18px; }
.note .kebab { margin-top: 9px; }
.closed { width: 100%; display: flex; align-items: center; justify-content: space-between; height: 48px; padding: 0 18px 0 16px; font-weight: 600; }
.closed svg { width: 12px; height: 8px; }
.viewport { flex: 1; min-width: 0; overflow: hidden; }
.viewport svg { width: 100%; height: 100%; }
.viewport text { font: 700 10px "Open Sans", sans-serif; }
.edge { stroke-linejoin: round; }
.big { fill: none; stroke: #505050; stroke-width: 4px; stroke-linejoin: round; }

/* Detail panel */
.detail { width: 297px; flex: none; margin-top: 5px; display: flex; flex-direction: column; background: #fff; box-shadow: -1px 0 5px #00000040; z-index: 1; }
.detail-head { display: flex; height: 73px; padding: 17px 2px 0 16px; border-bottom: 1px solid #cbcbd0; flex: none; }
.detail-head > div { flex: 1; }
.detail-head .icon-btn { margin-top: -6px; }
.ref { font-size: 11px; line-height: 20px; font-weight: 700; letter-spacing: 1px; color: #6a6976; }
h2 { font-size: 18px; line-height: 22px; font-weight: 600; }
h3 { font-size: 14px; font-weight: 600; }
.detail-main { flex: 1; min-height: 0; display: flex; }
.scroll { flex: 1; min-width: 0; overflow: hidden; white-space: nowrap; }
.fields { display: flex; flex-direction: column; gap: 11px; padding-left: 16px; }
.fields .first { line-height: 17px; }
dt { font-size: 12px; line-height: 17px; color: #6a6976; }
.prio { display: flex; align-items: center; gap: 8px; line-height: 22px; }
.prio .dot { width: 12px; height: 12px; }
.block { border-top: 1px solid #cbcbd0; padding: 7px 20px 0 16px; }
.fields + .block { margin-top: 15px; height: 105px; }
.row { display: flex; align-items: center; height: 40px; }
.end { margin-left: auto; }
.row .icon-btn { margin-right: -12px; }
.doc { width: 16px; height: 20px; }
.file a { margin-left: 12px; padding-top: 3px; color: #55545f; text-decoration: none; }
.avatar { width: 38px; height: 40px; margin-right: 10px; }
.comment { margin-top: 4px; height: 42px; }
.comment p { line-height: 18px; }
.comment small { display: block; font-size: 12px; line-height: 18px; color: #6a6976; }
.bar { width: 10px; padding: 7px 0 8px 2px; background: #f1f1f1; display: flex; flex-direction: column; overflow: hidden; color: #505050; }
.bar svg { width: 10px; height: 4px; margin-left: 4px; }
.bar span { flex: 1; margin: 197px 0 17px; background: #c1c1c1; }
.add { display: flex; align-items: center; height: 65px; flex: none; border-top: 1px solid #cbcbd0; padding: 0 12px 0 18px; gap: 13px; }
.add svg { width: 20px; height: 20px; margin-top: 4px; color: #04447c; }
.add input { flex: 1; min-width: 0; font-style: italic; }
.add input::placeholder { color: #9b9aa5; opacity: 1; }
.strip { height: 8px; flex: none; display: flex; align-items: flex-end; }
.strip i { flex: none; width: 233px; height: 3px; border-right: 1px solid #cbcbd0; }
```
